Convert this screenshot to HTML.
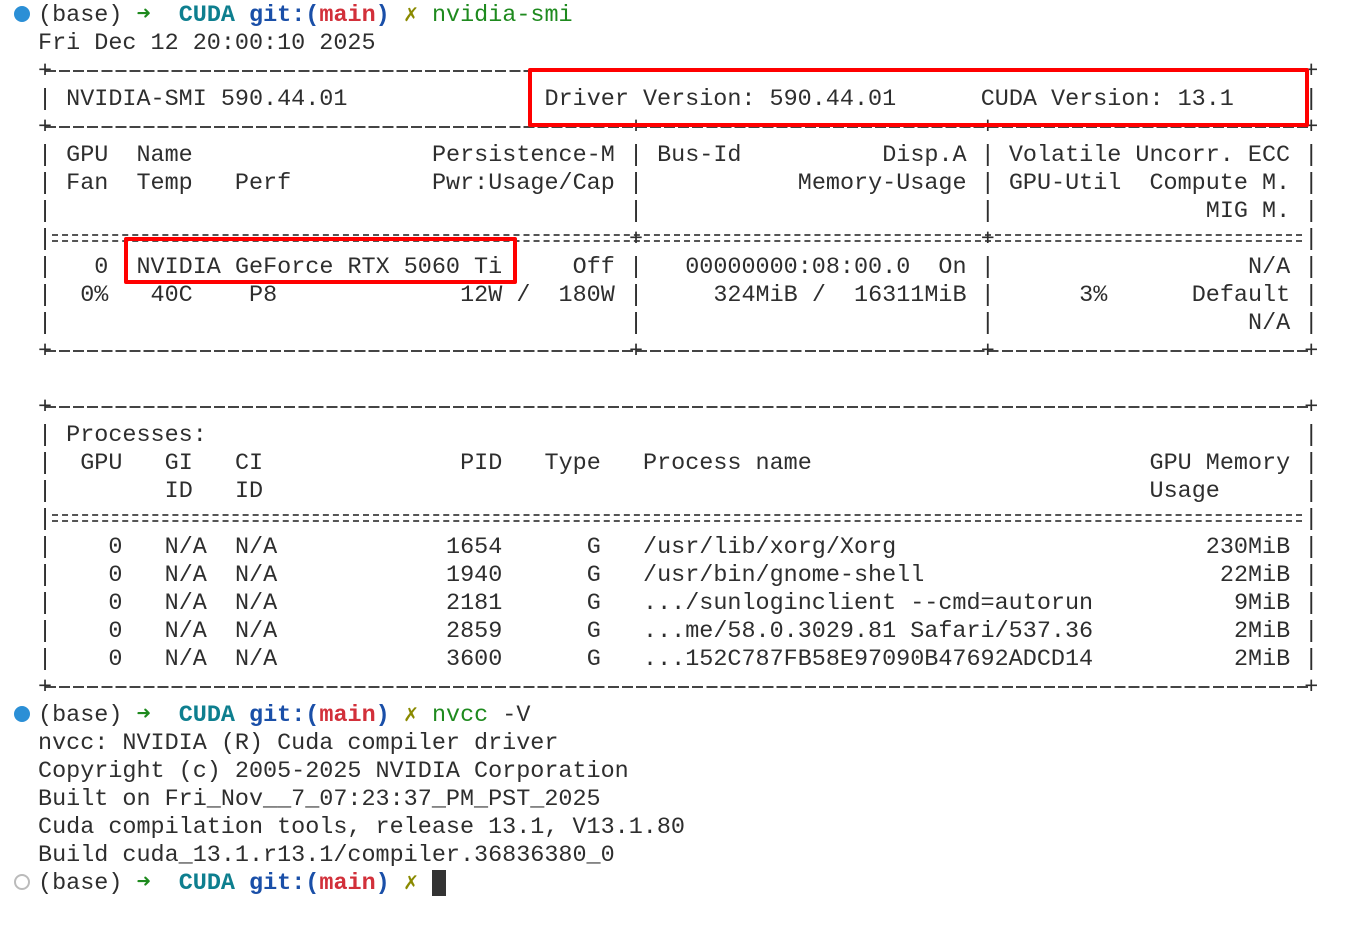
<!DOCTYPE html>
<html><head><meta charset="utf-8"><style>
html,body{margin:0;padding:0;background:#fff;width:1356px;height:938px;overflow:hidden}
body{position:relative;font-family:"Liberation Mono","DejaVu Sans Mono",monospace;font-size:23.45px;color:#2e2e2e}
.r{position:absolute;left:0;width:1356px;height:28px;line-height:28px}
.r i{font-style:normal;position:absolute;top:2px;white-space:pre;left:calc(38px + var(--c) * 14.07px)}
.dash{position:absolute;left:45px;width:1266px;top:14px;height:2px;background:repeating-linear-gradient(90deg,#444 0 11px,transparent 11px 14.07px)}
.eq{position:absolute;left:52px;width:1250px;top:10px;height:8px;border-top:2px dashed #555;border-bottom:2px dashed #555;box-sizing:border-box;background:transparent}
.dot{position:absolute;left:14px;top:6px;width:16px;height:16px;border-radius:50%;background:#2b8fd6}
.hdot{position:absolute;left:14px;top:6px;width:16px;height:16px;border-radius:50%;border:2.5px solid #bbb;box-sizing:border-box}
.g{color:#1e8a1e}.cu{color:#0e7f8f;font-weight:bold}.gi{color:#1a4fa8;font-weight:bold}.m{color:#d2303a;font-weight:bold}.x{color:#8a8a00}
.box{position:absolute;border:4.5px solid #f00;border-radius:2px;box-sizing:border-box}
.cur{position:absolute;left:432px;top:870px;width:14px;height:26px;background:#333}
</style></head><body>
<div class="r" style="top:0"><span class="dot"></span><i style="--c:0">(base)</i><i class="g" style="--c:7">➜</i><i class="cu" style="--c:10">CUDA</i><i class="gi" style="--c:15">git:(</i><i class="m" style="--c:20">main</i><i class="gi" style="--c:24">)</i><i class="x" style="--c:26">✗</i><i class="g" style="--c:28">nvidia-smi</i></div>
<div class="r" style="top:28px"><i style="--c:0">Fri Dec 12 20:00:10 2025</i></div>
<div class="r" style="top:56px"><div class="dash"></div><i style="--c:0">+</i><i style="--c:90">+</i></div>
<div class="r" style="top:84px"><i style="--c:0">|</i><i style="--c:2">NVIDIA-SMI 590.44.01</i><i style="--c:36">Driver Version: 590.44.01</i><i style="--c:67">CUDA Version: 13.1</i><i style="--c:90">|</i></div>
<div class="r" style="top:112px"><div class="dash"></div><i style="--c:0">+</i><i style="--c:42">+</i><i style="--c:67">+</i><i style="--c:90">+</i></div>
<div class="r" style="top:140px"><i style="--c:0">|</i><i style="--c:2">GPU  Name</i><i style="--c:28">Persistence-M</i><i style="--c:42">|</i><i style="--c:44">Bus-Id</i><i style="--c:60">Disp.A</i><i style="--c:67">|</i><i style="--c:69">Volatile Uncorr. ECC</i><i style="--c:90">|</i></div>
<div class="r" style="top:168px"><i style="--c:0">|</i><i style="--c:2">Fan  Temp   Perf</i><i style="--c:28">Pwr:Usage/Cap</i><i style="--c:42">|</i><i style="--c:54">Memory-Usage</i><i style="--c:67">|</i><i style="--c:69">GPU-Util  Compute M.</i><i style="--c:90">|</i></div>
<div class="r" style="top:196px"><i style="--c:0">|</i><i style="--c:42">|</i><i style="--c:67">|</i><i style="--c:83">MIG M.</i><i style="--c:90">|</i></div>
<div class="r" style="top:224px"><div class="eq"></div><i style="--c:0">|</i><i style="--c:42">+</i><i style="--c:67">+</i><i style="--c:90">|</i></div>
<div class="r" style="top:252px"><i style="--c:0">|</i><i style="--c:4">0</i><i style="--c:7">NVIDIA GeForce RTX 5060 Ti</i><i style="--c:38">Off</i><i style="--c:42">|</i><i style="--c:46">00000000:08:00.0  On</i><i style="--c:67">|</i><i style="--c:86">N/A</i><i style="--c:90">|</i></div>
<div class="r" style="top:280px"><i style="--c:0">|</i><i style="--c:3">0%</i><i style="--c:8">40C</i><i style="--c:15">P8</i><i style="--c:30">12W /  180W</i><i style="--c:42">|</i><i style="--c:48">324MiB /  16311MiB</i><i style="--c:67">|</i><i style="--c:74">3%</i><i style="--c:82">Default</i><i style="--c:90">|</i></div>
<div class="r" style="top:308px"><i style="--c:0">|</i><i style="--c:42">|</i><i style="--c:67">|</i><i style="--c:86">N/A</i><i style="--c:90">|</i></div>
<div class="r" style="top:336px"><div class="dash"></div><i style="--c:0">+</i><i style="--c:42">+</i><i style="--c:67">+</i><i style="--c:90">+</i></div>
<div class="r" style="top:392px"><div class="dash"></div><i style="--c:0">+</i><i style="--c:90">+</i></div>
<div class="r" style="top:420px"><i style="--c:0">|</i><i style="--c:2">Processes:</i><i style="--c:90">|</i></div>
<div class="r" style="top:448px"><i style="--c:0">|</i><i style="--c:3">GPU</i><i style="--c:9">GI</i><i style="--c:14">CI</i><i style="--c:30">PID</i><i style="--c:36">Type</i><i style="--c:43">Process name</i><i style="--c:79">GPU Memory</i><i style="--c:90">|</i></div>
<div class="r" style="top:476px"><i style="--c:0">|</i><i style="--c:9">ID</i><i style="--c:14">ID</i><i style="--c:79">Usage</i><i style="--c:90">|</i></div>
<div class="r" style="top:504px"><div class="eq"></div><i style="--c:0">|</i><i style="--c:90">|</i></div>
<div class="r" style="top:532px"><i style="--c:0">|</i><i style="--c:5">0</i><i style="--c:9">N/A</i><i style="--c:14">N/A</i><i style="--c:29">1654</i><i style="--c:39">G</i><i style="--c:43">/usr/lib/xorg/Xorg</i><i style="--c:83">230MiB</i><i style="--c:90">|</i></div>
<div class="r" style="top:560px"><i style="--c:0">|</i><i style="--c:5">0</i><i style="--c:9">N/A</i><i style="--c:14">N/A</i><i style="--c:29">1940</i><i style="--c:39">G</i><i style="--c:43">/usr/bin/gnome-shell</i><i style="--c:84">22MiB</i><i style="--c:90">|</i></div>
<div class="r" style="top:588px"><i style="--c:0">|</i><i style="--c:5">0</i><i style="--c:9">N/A</i><i style="--c:14">N/A</i><i style="--c:29">2181</i><i style="--c:39">G</i><i style="--c:43">.../sunloginclient --cmd=autorun</i><i style="--c:85">9MiB</i><i style="--c:90">|</i></div>
<div class="r" style="top:616px"><i style="--c:0">|</i><i style="--c:5">0</i><i style="--c:9">N/A</i><i style="--c:14">N/A</i><i style="--c:29">2859</i><i style="--c:39">G</i><i style="--c:43">...me/58.0.3029.81 Safari/537.36</i><i style="--c:85">2MiB</i><i style="--c:90">|</i></div>
<div class="r" style="top:644px"><i style="--c:0">|</i><i style="--c:5">0</i><i style="--c:9">N/A</i><i style="--c:14">N/A</i><i style="--c:29">3600</i><i style="--c:39">G</i><i style="--c:43">...152C787FB58E97090B47692ADCD14</i><i style="--c:85">2MiB</i><i style="--c:90">|</i></div>
<div class="r" style="top:672px"><div class="dash"></div><i style="--c:0">+</i><i style="--c:90">+</i></div>
<div class="r" style="top:700px"><span class="dot"></span><i style="--c:0">(base)</i><i class="g" style="--c:7">➜</i><i class="cu" style="--c:10">CUDA</i><i class="gi" style="--c:15">git:(</i><i class="m" style="--c:20">main</i><i class="gi" style="--c:24">)</i><i class="x" style="--c:26">✗</i><i class="g" style="--c:28">nvcc</i><i style="--c:33">-V</i></div>
<div class="r" style="top:728px"><i style="--c:0">nvcc: NVIDIA (R) Cuda compiler driver</i></div>
<div class="r" style="top:756px"><i style="--c:0">Copyright (c) 2005-2025 NVIDIA Corporation</i></div>
<div class="r" style="top:784px"><i style="--c:0">Built on Fri_Nov__7_07:23:37_PM_PST_2025</i></div>
<div class="r" style="top:812px"><i style="--c:0">Cuda compilation tools, release 13.1, V13.1.80</i></div>
<div class="r" style="top:840px"><i style="--c:0">Build cuda_13.1.r13.1/compiler.36836380_0</i></div>
<div class="r" style="top:868px"><span class="hdot"></span><i style="--c:0">(base)</i><i class="g" style="--c:7">➜</i><i class="cu" style="--c:10">CUDA</i><i class="gi" style="--c:15">git:(</i><i class="m" style="--c:20">main</i><i class="gi" style="--c:24">)</i><i class="x" style="--c:26">✗</i></div>
<div class="cur"></div>
<div class="box" style="left:528px;top:68px;width:781px;height:59px"></div>
<div class="box" style="left:124px;top:237px;width:393px;height:47px"></div>
</body></html>
